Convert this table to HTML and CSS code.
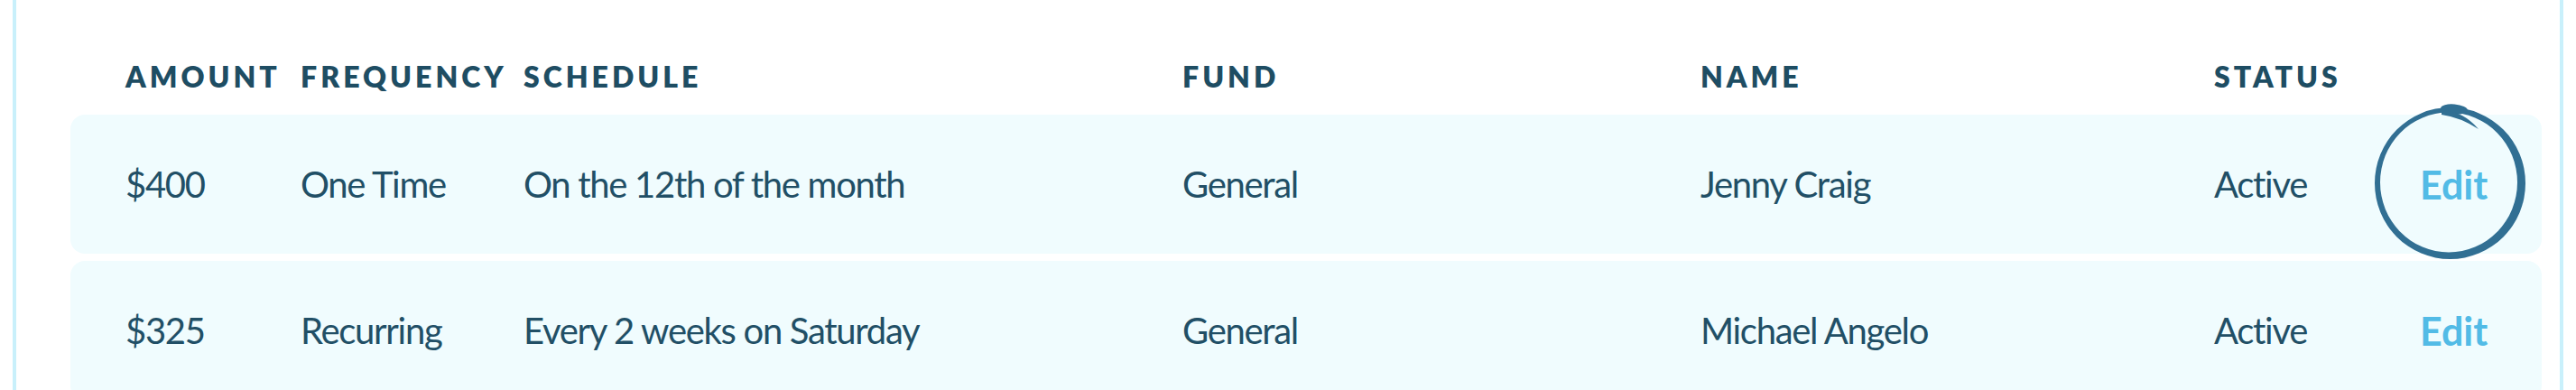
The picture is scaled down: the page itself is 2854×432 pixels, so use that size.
FILE: index.html
```html
<!DOCTYPE html>
<html lang="en">
<head>
<meta charset="utf-8">
<title>Giving schedule</title>
<link rel="stylesheet" href="styles.css">
</head>
<body>
<div class="panel">
  <div class="grid head">
    <div class="th">Amount</div>
    <div class="th">Frequency</div>
    <div class="th">Schedule</div>
    <div class="th">Fund</div>
    <div class="th">Name</div>
    <div class="th">Status</div>
    <div class="th"></div>
  </div>
  <div class="rows">
    <div class="grid row">
      <div class="td">$400</div>
      <div class="td">One Time</div>
      <div class="td">On the 12th of the month</div>
      <div class="td">General</div>
      <div class="td">Jenny Craig</div>
      <div class="td">Active</div>
      <div class="td edit-cell">
        <a class="edit" href="#">Edit</a>
        <svg class="scribble" width="180" height="184" viewBox="0 0 180 184" aria-hidden="true">
          <path fill="#316f93" fill-rule="evenodd" d="M6 92 A83.5 84 0 1 0 173 92 A83.5 84 0 1 0 6 92 Z M12 91 A76 77.5 0 1 0 164 91 A76 77.5 0 1 0 12 91 Z"/>
          <ellipse cx="94" cy="10" rx="15" ry="5.5" fill="#316f93" transform="rotate(5 94 10)"/>
          <path fill="#316f93" d="M80 11 Q104 12 121 32 Q101 19 80 16 Z"/>
        </svg>
      </div>
    </div>
    <div class="grid row">
      <div class="td">$325</div>
      <div class="td">Recurring</div>
      <div class="td">Every 2 weeks on Saturday</div>
      <div class="td">General</div>
      <div class="td">Michael Angelo</div>
      <div class="td">Active</div>
      <div class="td edit-cell">
        <a class="edit" href="#">Edit</a>
      </div>
    </div>
  </div>
</div>
</body>
</html>
```

FILE: styles.css
```css
html, body {
  margin: 0;
  padding: 0;
  background: #ffffff;
}

body {
  width: 2854px;
  height: 432px;
  overflow: hidden;
  font-family: "Lato", "Liberation Sans", sans-serif;
  color: #214f66;
}

.panel {
  margin: 0 14px;
  height: 432px;
  box-sizing: border-box;
  border-left: 4px solid #c9f0fb;
  border-right: 4px solid #c9f0fb;
  padding: 0 20px 0 60px;
}

.grid {
  display: grid;
  grid-template-columns: 194px 247px 730px 574px 569px 228px 1fr;
  padding-left: 61px;
}

.head {
  height: 127px;
  box-sizing: border-box;
  align-items: end;
  padding-bottom: 26px;
}

.th {
  font-family: "Lato", "Liberation Sans", sans-serif;
  font-weight: 800;
  font-size: 32px;
  line-height: 32px;
  letter-spacing: 4px;
  text-transform: uppercase;
  color: #1e4d63;
  white-space: nowrap;
}

.rows {
  display: flex;
  flex-direction: column;
  gap: 8px;
}

.row {
  height: 154px;
  background: #f0fcfe;
  border-radius: 16px;
  align-items: center;
}

.td {
  font-size: 40px;
  letter-spacing: -1.3px;
  white-space: nowrap;
}

.edit-cell {
  position: relative;
  align-self: stretch;
  display: flex;
  align-items: center;
}

.edit {
  font-weight: 700;
  font-size: 43px;
  letter-spacing: 0;
  color: #52bbe6;
  text-decoration: none;
  position: relative;
  z-index: 1;
}

.scribble {
  position: absolute;
  left: -56px;
  top: -16px;
}
```
